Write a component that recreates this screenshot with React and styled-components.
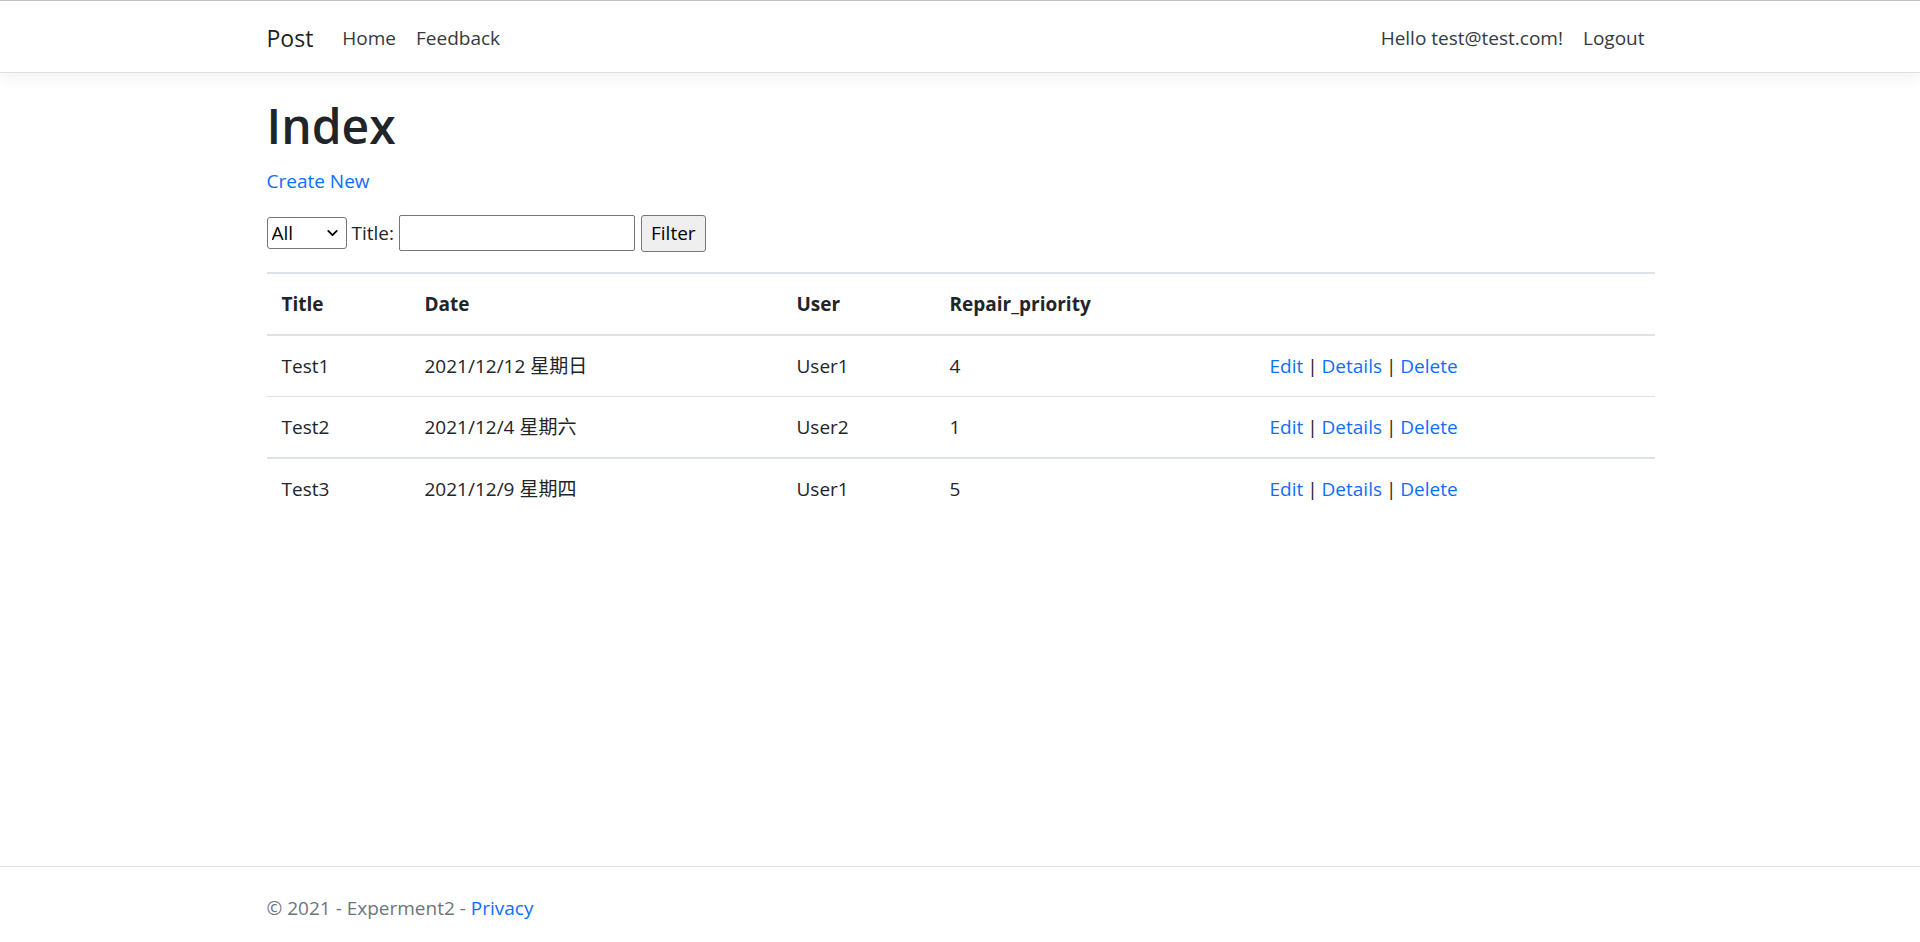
import React from 'react';
import styled, { createGlobalStyle } from 'styled-components';
import { ChevronDown } from 'lucide-react';

const GlobalStyle = createGlobalStyle`
  html, body {
    margin: 0;
    padding: 0;
  }
  body {
    font-family: "Segoe UI", "Open Sans", "Noto Sans CJK SC", sans-serif;
    font-size: 19px;
    line-height: 30px;
    color: #212529;
    background: #fff;
  }
  *, *::before, *::after {
    box-sizing: border-box;
  }
`;

const Page = styled.div`
  min-height: 100vh;
  display: flex;
  flex-direction: column;
  border-top: 1px solid #c4c4c4;
`;

const Navbar = styled.header`
  height: 72px;
  background: #fff;
  border-bottom: 1px solid #dee2e6;
  box-shadow: 0 5px 15px rgba(0, 0, 0, 0.05);
  margin-bottom: 20px;
`;

const Container = styled.div`
  width: 1425px;
  margin: 0 auto;
  padding: 0 18px 0 19px;
`;

const NavInner = styled(Container)`
  height: 100%;
  display: flex;
  align-items: center;
  padding-top: 3px;
`;

const Brand = styled.a`
  font-size: 23px;
  line-height: 37px;
  color: rgba(0, 0, 0, 0.9);
  margin-right: 19px;
  text-decoration: none;
`;

const NavList = styled.nav`
  display: flex;
  align-items: center;
  flex: ${p => (p.$grow ? 1 : 'none')};
`;

const NavLink = styled.a`
  padding: 10px;
  color: #343a40;
  text-decoration: none;
`;

const Main = styled(Container)`
  flex: 1;
`;

const Title = styled.h1`
  font-size: 48px;
  font-weight: 600;
  line-height: 60px;
  margin: 3px 0 10px;
`;

const Link = styled.a`
  color: #0d6efd;
  text-decoration: none;
`;

const Para = styled.p`
  margin: 0 0 17px;
`;

const FilterForm = styled.form`
  display: flex;
  align-items: center;
  height: 40px;
  margin-bottom: 19px;
`;

const SelectWrap = styled.span`
  position: relative;
  display: inline-flex;
  margin-right: 5px;

  svg {
    position: absolute;
    right: 6px;
    top: 50%;
    transform: translateY(-50%);
    pointer-events: none;
  }
`;

const Select = styled.select`
  appearance: none;
  width: 80px;
  height: 32px;
  font: inherit;
  font-size: 19px;
  line-height: 30px;
  color: #000;
  border: 1px solid #767676;
  border-radius: 3px;
  background: #fff;
  padding: 0 4px;
`;

const Label = styled.label`
  margin-right: 5px;
`;

const TextInput = styled.input`
  width: 236px;
  height: 36px;
  font: inherit;
  border: 1px solid #767676;
  border-radius: 2px;
  padding: 1px 2px;
  margin-right: 6px;
`;

const Button = styled.button`
  height: 37px;
  font: inherit;
  color: #000;
  background: #efefef;
  border: 1px solid #767676;
  border-radius: 3px;
  padding: 0 9px;
`;

const Table = styled.table`
  width: 100%;
  table-layout: fixed;
  border-collapse: collapse;
  margin-bottom: 20px;
`;

const Th = styled.th`
  width: ${p => p.$w}px;
  text-align: left;
  font-weight: 700;
  padding: 15px;
  vertical-align: bottom;
  border-top: 2px solid #dee2e6;
  border-bottom: 2px solid #dee2e6;
`;

const Td = styled.td`
  padding: 15px;
  vertical-align: top;
  border-top: ${p => (p.$thick ? 2 : 1)}px solid #dee2e6;
`;

const Actions = styled.span`
  word-spacing: -1px;
`;

const Footer = styled.footer`
  border-top: 1px solid #dee2e6;
  padding-top: 7px;
  line-height: 68px;
  color: #6c757d;
  white-space: nowrap;
`;

const columns = [
  { label: 'Title', w: 143 },
  { label: 'Date', w: 372 },
  { label: 'User', w: 153 },
  { label: 'Repair_priority', w: 320 },
  { label: '', w: 400 },
];

const rows = [
  { title: 'Test1', date: '2021/12/12 星期日', user: 'User1', priority: 4 },
  { title: 'Test2', date: '2021/12/4 星期六', user: 'User2', priority: 1 },
  { title: 'Test3', date: '2021/12/9 星期四', user: 'User1', priority: 5, thick: true },
];

export default function App() {
  return (
    <Page>
      <GlobalStyle />
      <Navbar>
        <NavInner>
          <Brand href="#">Post</Brand>
          <NavList $grow>
            <NavLink href="#">Home</NavLink>
            <NavLink href="#">Feedback</NavLink>
          </NavList>
          <NavList>
            <NavLink href="#">Hello test@test.com!</NavLink>
            <NavLink href="#">Logout</NavLink>
          </NavList>
        </NavInner>
      </Navbar>

      <Main>
        <Title>Index</Title>
        <Para>
          <Link href="#">Create New</Link>
        </Para>
        <FilterForm onSubmit={e => e.preventDefault()}>
          <SelectWrap>
            <Select defaultValue="All">
              <option>All</option>
              <option>Open</option>
              <option>Closed</option>
            </Select>
            <ChevronDown size={17} strokeWidth={2.6} color="#000" />
          </SelectWrap>
          <Label>Title:</Label>
          <TextInput type="text" />
          <Button type="submit">Filter</Button>
        </FilterForm>

        <Table>
          <thead>
            <tr>
              {columns.map(c => (
                <Th key={c.w} $w={c.w}>{c.label}</Th>
              ))}
            </tr>
          </thead>
          <tbody>
            {rows.map(r => (
              <tr key={r.title}>
                <Td $thick={r.thick}>{r.title}</Td>
                <Td $thick={r.thick}>{r.date}</Td>
                <Td $thick={r.thick}>{r.user}</Td>
                <Td $thick={r.thick}>{r.priority}</Td>
                <Td $thick={r.thick}>
                  <Actions>
                    <Link href="#">Edit</Link> | <Link href="#">Details</Link> |{' '}
                    <Link href="#">Delete</Link>
                  </Actions>
                </Td>
              </tr>
            ))}
          </tbody>
        </Table>
      </Main>

      <Footer>
        <Container>
          &copy; 2021 - Experment2 - <Link href="#">Privacy</Link>
        </Container>
      </Footer>
    </Page>
  );
}
